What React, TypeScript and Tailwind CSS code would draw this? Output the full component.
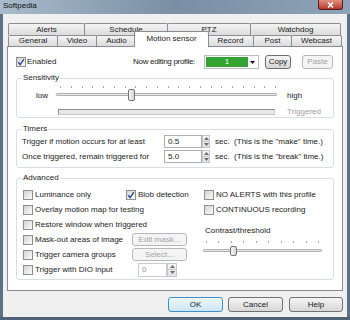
import React from 'react';

function CheckBox({ checked = false }: { checked?: boolean }) {
  return (
    <span className="w-[10px] h-[10px] shrink-0 border border-[#8e8f8f] bg-linear-to-br from-[#d4d4d4] to-[#fbfbfb] flex items-center justify-center">
      {checked && (
        <svg width="8" height="8" viewBox="0 0 8 8">
          <path d="M1.2 4.3 L3.1 6.6 L6.9 1.2" stroke="#2a4a8f" strokeWidth="1.4" fill="none" />
        </svg>
      )}
    </span>
  );
}

function CheckRow({ label, checked }: { label: string; checked?: boolean }) {
  return (
    <div className="h-[15px] flex items-center gap-[2px] whitespace-nowrap">
      <CheckBox checked={checked} />
      <span>{label}</span>
    </div>
  );
}

function Spinner({ className }: { className: string }) {
  return (
    <div className={`flex flex-col border border-[#c3c6cc] bg-linear-to-b from-[#f6f6f6] to-[#e2e2e2] ${className}`}>
      <div className="flex-1 flex items-center justify-center border-b border-[#c3c6cc]">
        <svg width="5" height="3" viewBox="0 0 5 3"><path d="M0 3 L2.5 0 L5 3 Z" fill="#6d6d6d" /></svg>
      </div>
      <div className="flex-1 flex items-center justify-center">
        <svg width="5" height="3" viewBox="0 0 5 3"><path d="M0 0 L2.5 3 L5 0 Z" fill="#6d6d6d" /></svg>
      </div>
    </div>
  );
}

function Tab({ label, className }: { label: string; className: string }) {
  return (
    <div
      className={`h-full flex items-center justify-center border border-b-0 border-[#8c8e94] rounded-t-[2px] bg-linear-to-b from-[#f4f4f4] to-[#dcdcdc] ${className}`}
    >
      {label}
    </div>
  );
}

function WinButton({ label, className, disabled, primary }: { label: string; className: string; disabled?: boolean; primary?: boolean }) {
  const look = disabled
    ? 'border-[#b5b9bd] bg-[#f4f4f4] text-[#a3a3a3]'
    : primary
    ? 'border-[#3c8fc9] bg-linear-to-b from-[#eef7fd] to-[#cbe6f6]'
    : 'border-[#707070] bg-linear-to-b from-[#f5f5f5] to-[#d6d6d6]';
  return (
    <div className={`flex items-center justify-center border rounded-[3px] shrink-0 ${look} ${className}`}>{label}</div>
  );
}

const sensTicks = Array.from({ length: 21 });
const contrastTicks = Array.from({ length: 10 });

export default function App() {
  return (
    <div className="w-[350px] h-[320px] overflow-hidden flex flex-col bg-[#5d7186] font-['Liberation_Sans',Arial,sans-serif] text-[8px] leading-[10px] text-[#1b1b1b]">
      {/* Title bar */}
      <div className="h-[14px] shrink-0 flex justify-between bg-linear-to-r from-[#a9bbcc] via-[#7a8fa5] to-[#8ea3b8]">
        <span className="pl-[3px] pt-[1px] text-[#111]">Softpedia</span>
        <div className="mr-[7px] w-[25px] h-[10px] rounded-b-[3px] border border-t-0 border-[#5a2020] bg-linear-to-b from-[#e09080] to-[#b8322a] flex items-center justify-center">
          <svg width="7" height="6" viewBox="0 0 7 6">
            <path d="M1 0.5 L6 5.5 M6 0.5 L1 5.5" stroke="#fff" strokeWidth="1.5" />
          </svg>
        </div>
      </div>

      <div className="flex-1 flex">
        <div className="w-[3px] bg-[#5d7186]" />
        <div className="flex-1 bg-[#f0f0f0] flex flex-col">
          {/* Tabs */}
          <div className="ml-[5px] mt-[9px] flex flex-col">
            <div className="flex h-[12px]">
              <Tab label="Alerts" className="w-[77px]" />
              <Tab label="Schedule" className="w-[84px] -ml-px" />
              <Tab label="PTZ" className="w-[84px] -ml-px" />
              <Tab label="Watchdog" className="w-[91px] -ml-px" />
            </div>
            <div className="flex h-[11px]">
              <Tab label="General" className="w-[50px]" />
              <Tab label="Video" className="w-[40px] -ml-px" />
              <Tab label="Audio" className="w-[41px] -ml-px" />
              <div className="relative z-10 self-end -mb-px -ml-[3px] w-[75px] h-[16px] shrink-0 border border-b-0 border-[#898c95] rounded-t-[2px] bg-white flex items-center justify-center pb-[1px]">
                Motion sensor
              </div>
              <Tab label="Record" className="w-[47px] -ml-[2px]" />
              <Tab label="Post" className="w-[39px] -ml-px" />
              <Tab label="Webcast" className="w-[51px] -ml-px" />
            </div>
          </div>

          {/* Panel */}
          <div className="ml-[4px] w-[336px] h-[245px] border border-[#898c95] bg-white flex flex-col">
            {/* Enabled / profile row */}
            <div className="mt-[8px] h-[14px] flex items-center">
              <div className="w-[125px] pl-[8px] flex items-center gap-[1px]">
                <CheckBox checked />
                <span>Enabled</span>
              </div>
              <span className="w-[71px] whitespace-nowrap tracking-[-0.3px]">Now editing profile:</span>
              <div className="w-[55px] h-[14px] border border-[#b9bcc2] bg-white p-[1px] flex">
                <div className="w-[42px] bg-[#33a334] text-white flex items-center justify-center">1</div>
                <div className="flex-1 flex items-center justify-center">
                  <svg width="5" height="3" viewBox="0 0 5 3"><path d="M0 0 L2.5 3 L5 0 Z" fill="#111" /></svg>
                </div>
              </div>
              <WinButton label="Copy" className="ml-[6px] w-[26px] h-[14px]" />
              <WinButton label="Paste" className="ml-[11px] w-[31px] h-[14px]" disabled />
            </div>

            {/* Sensitivity */}
            <fieldset className="mt-[4px] ml-[8px] w-[318px] h-[45px] border border-[#d5dfe5] rounded-[3px]">
              <legend className="ml-[5px] px-[1px] leading-[10px]">Sensitivity</legend>
              <div className="mt-[3px] h-[15px] flex items-end">
                <span className="ml-[19px] w-[20px]">low</span>
                <div className="relative w-[221px] h-[15px]">
                  <div className="absolute top-0 left-[4px] right-[1px] flex justify-between">
                    {sensTicks.map((_, i) => (
                      <span key={i} className="w-px h-[2px] bg-[#a8a8a8]" />
                    ))}
                  </div>
                  <div className="absolute top-[7px] left-0 right-0 h-[3px] border border-[#b0b0b0] bg-[#e9e9e9] rounded-[1px]" />
                  <div className="absolute top-[3px] left-[72px] w-[7px] h-[12px] border border-[#767676] rounded-[2px] bg-linear-to-r from-[#f7f7f7] to-[#d5d5d5]" />
                </div>
                <span className="ml-[10px]">high</span>
              </div>
              <div className="mt-[6px] h-[10px] flex items-center">
                <div className="ml-[41px] w-[217px] h-[6px] border border-[#8d8d8d] border-r-[#c8c8c8] border-b-[#c8c8c8] bg-[#e8e8e8]" />
                <span className="ml-[12px] text-[#9c9c9c]">Triggered</span>
              </div>
            </fieldset>

            {/* Timers */}
            <fieldset className="mt-[6px] ml-[8px] w-[318px] h-[44px] border border-[#d5dfe5] rounded-[3px]">
              <legend className="ml-[5px] px-[1px] leading-[10px]">Timers</legend>
              <div className="mt-[1px] h-[13px] flex items-center">
                <span className="ml-[5px] w-[142px] whitespace-nowrap">Trigger if motion occurs for at least</span>
                <div className="w-[38px] h-full border border-[#abadb3] pl-[3px] flex items-center">0.5</div>
                <Spinner className="w-[8px] h-full" />
                <span className="ml-[5px] whitespace-pre">sec.  (This is the "make" time.)</span>
              </div>
              <div className="mt-[2px] h-[13px] flex items-center">
                <span className="ml-[5px] w-[142px] whitespace-nowrap">Once triggered, remain triggered for</span>
                <div className="w-[38px] h-full border border-[#abadb3] pl-[3px] flex items-center">5.0</div>
                <Spinner className="w-[8px] h-full" />
                <span className="ml-[5px] whitespace-pre">sec.  (This is the "break" time.)</span>
              </div>
            </fieldset>

            {/* Advanced */}
            <fieldset className="mt-[5px] ml-[8px] w-[318px] h-[107px] border border-[#d5dfe5] rounded-[3px]">
              <legend className="ml-[5px] px-[1px] leading-[10px]">Advanced</legend>
              <div className="mt-[4px] flex">
                <div className="ml-[6px] w-[103px] flex flex-col">
                  <CheckRow label="Luminance only" />
                  <CheckRow label="Overlay motion map for testing" />
                  <CheckRow label="Restore window when triggered" />
                  <CheckRow label="Mask-out areas of image" />
                  <CheckRow label="Trigger camera groups" />
                  <CheckRow label="Trigger with DIO input" />
                </div>
                <div className="w-[78px] flex flex-col">
                  <CheckRow label="Blob detection" checked />
                  <div className="h-[15px]" />
                  <div className="h-[15px]" />
                  <div className="h-[15px] flex items-center">
                    <WinButton label="Edit mask..." className="ml-[6px] w-[55px] h-[13px]" disabled />
                  </div>
                  <div className="h-[15px] flex items-center">
                    <WinButton label="Select..." className="ml-[6px] w-[55px] h-[13px]" disabled />
                  </div>
                  <div className="h-[15px] flex items-center">
                    <div className="ml-[12px] h-[14px] flex">
                      <div className="w-[29px] h-full border border-[#c9ccd1] pl-[3px] flex items-center text-[#8f8f8f]">0</div>
                      <Spinner className="w-[10px] h-full" />
                    </div>
                  </div>
                </div>
                <div className="flex flex-col">
                  <CheckRow label="NO ALERTS with this profile" />
                  <CheckRow label="CONTINUOUS recording" />
                  <span className="mt-[9px] ml-[1px]">Contrast/threshold</span>
                  <div className="relative mt-[5px] -ml-px w-[119px] h-[15px]">
                    <div className="absolute top-0 left-[3px] right-[3px] flex justify-between">
                      {contrastTicks.map((_, i) => (
                        <span key={i} className="w-px h-[2px] bg-[#a8a8a8]" />
                      ))}
                    </div>
                    <div className="absolute top-[8px] left-0 right-0 h-[3px] border border-[#b0b0b0] bg-[#e9e9e9] rounded-[1px]" />
                    <div className="absolute top-[5px] left-[27px] w-[7px] h-[10px] border border-[#767676] rounded-[2px] bg-linear-to-r from-[#f7f7f7] to-[#d5d5d5]" />
                  </div>
                </div>
              </div>
            </fieldset>
          </div>

          {/* Dialog buttons */}
          <div className="mt-[6px] flex justify-end pr-[4px]">
            <WinButton label="OK" className="w-[55px] h-[15px]" primary />
            <WinButton label="Cancel" className="ml-[5px] w-[55px] h-[15px]" />
            <WinButton label="Help" className="ml-[6px] w-[54px] h-[15px]" />
          </div>
        </div>
        <div className="w-[3px] bg-[#5d7186]" />
      </div>
      <div className="h-[3px] shrink-0 bg-[#4f6277]" />
    </div>
  );
}
